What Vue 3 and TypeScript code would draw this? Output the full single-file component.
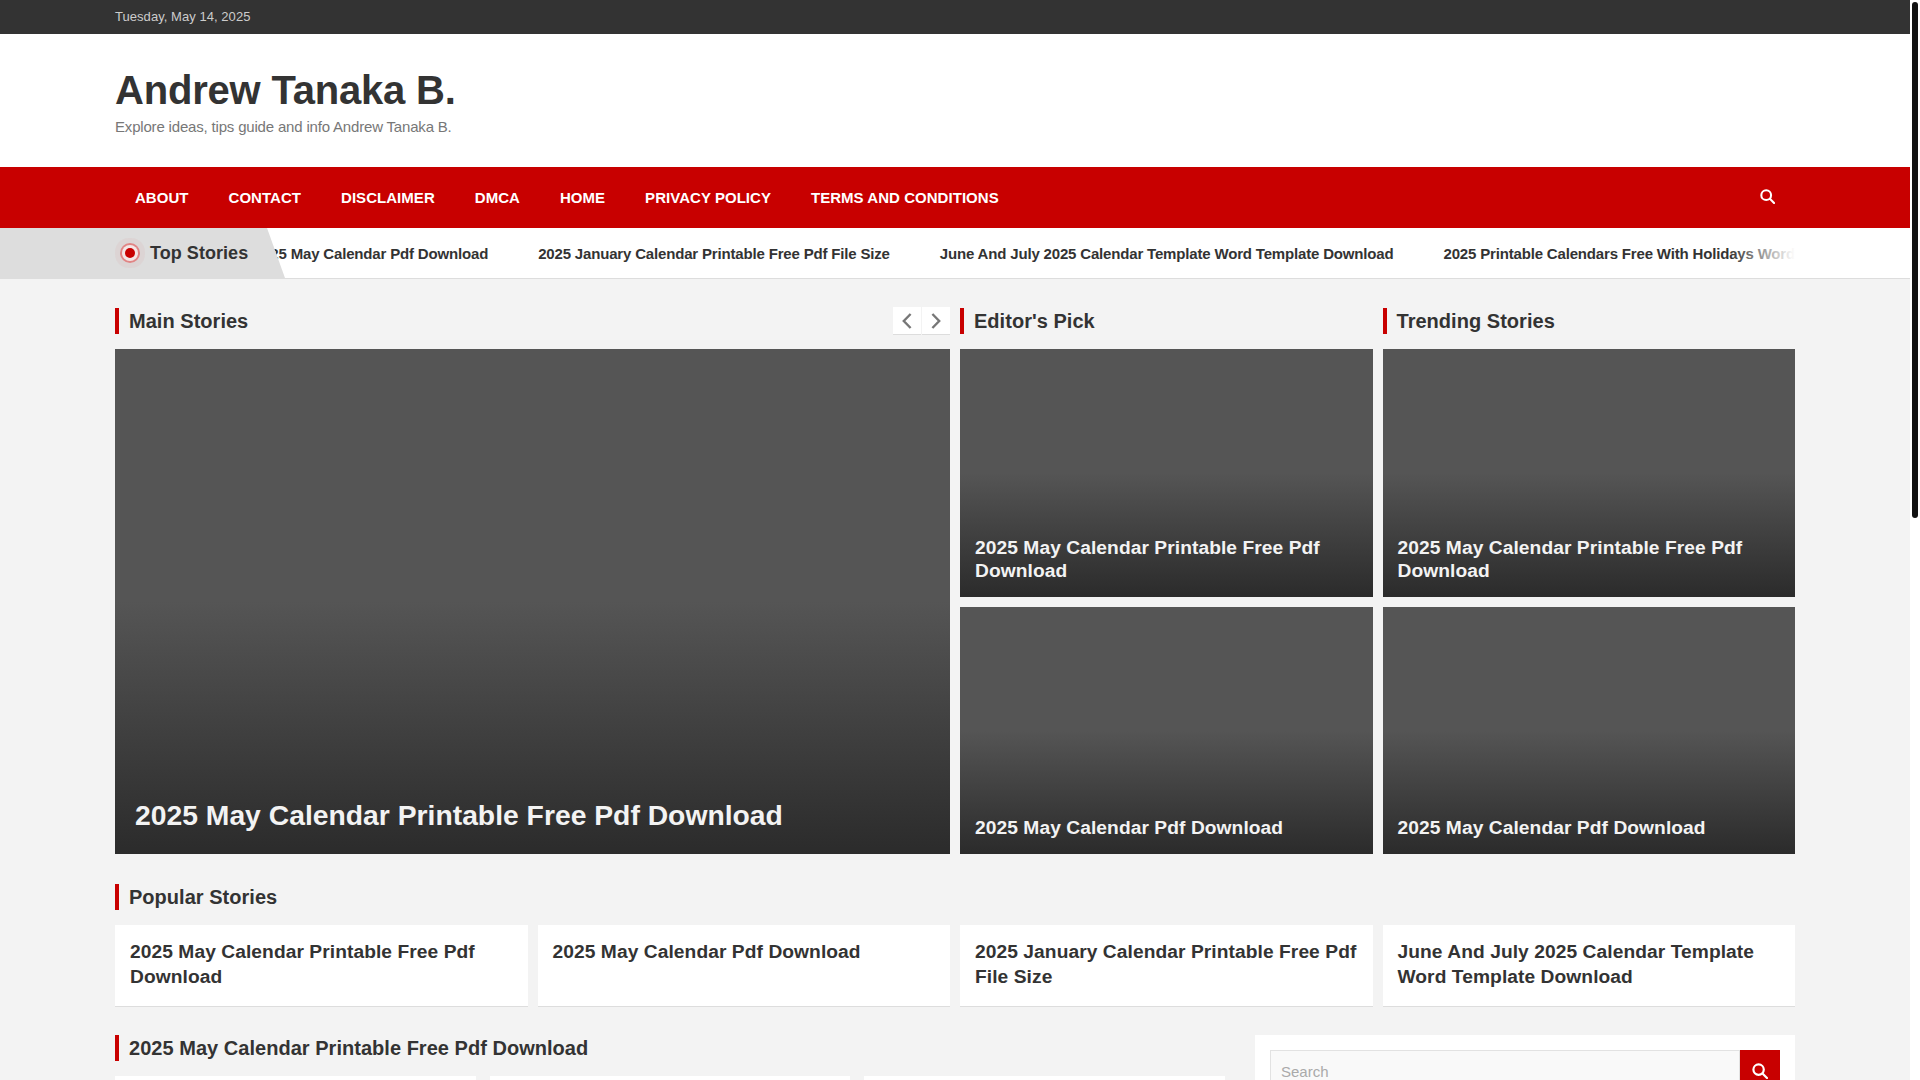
<script setup lang="ts">
const navItems: string[] = ['About', 'Contact', 'Disclaimer', 'DMCA', 'Home', 'Privacy Policy', 'Terms and Conditions']
const tickers: string[] = [
  '2025 May Calendar Pdf Download',
  '2025 January Calendar Printable Free Pdf File Size',
  'June And July 2025 Calendar Template Word Template Download',
  '2025 Printable Calendars Free With Holidays Word Template Download',
]
const editors: string[] = ['2025 May Calendar Printable Free Pdf Download', '2025 May Calendar Pdf Download']
const popular: string[] = [
  '2025 May Calendar Printable Free Pdf Download',
  '2025 May Calendar Pdf Download',
  '2025 January Calendar Printable Free Pdf File Size',
  'June And July 2025 Calendar Template Word Template Download',
]
const posts: string[] = [
  '2025 May Calendar Printable Free Pdf',
  '2025 May Calendar Pdf Download',
  '2025 January Calendar Printable Free Pdf File Size',
  'June And July 2025 Calendar Template',
  '2025 Printable Calendars Free With Holidays',
  '2025 May Calendar Printable Free Pdf Download',
]
</script>

<template>
  <div class="page">
    <div class="topbar">
      <div class="wrap"><span class="date">Tuesday, May 14, 2025</span></div>
    </div>

    <header class="brand">
      <div class="wrap">
        <h1 class="site-title">Andrew Tanaka B.</h1>
        <p class="tagline">Explore ideas, tips guide and info Andrew Tanaka B.</p>
      </div>
    </header>

    <nav class="nav">
      <div class="wrap nav-in">
        <a v-for="item in navItems" :key="item" class="nav-link">{{ item }}</a>
        <svg class="nav-search" viewBox="0 0 16 16" width="15" height="15" fill="none" stroke="#fff" stroke-width="2.2">
          <circle cx="6.6" cy="6.6" r="5.2" />
          <path d="M10.5 10.5 15 15" stroke-linecap="round" />
        </svg>
      </div>
    </nav>

    <div class="ticker">
      <div class="ticker-bg"></div>
      <div class="wrap ticker-in">
        <div class="ticker-label">
          <span class="pulse"></span>
          <span>Top Stories</span>
        </div>
        <div class="marquee">
          <div class="track">
            <a v-for="t in tickers" :key="t" class="tick">{{ t }}</a>
          </div>
          <div class="fade"></div>
        </div>
      </div>
    </div>

    <main class="wrap content">
      <section class="hero">
        <div class="hero-col">
          <div class="head-row">
            <h2 class="head">Main Stories</h2>
            <div class="arrows">
              <button class="arrow" type="button" aria-label="Previous">
                <svg viewBox="0 0 10 16" width="10" height="16" fill="none" stroke="#777" stroke-width="2.4"><path d="M8.6 1 1.8 8l6.8 7" /></svg>
              </button>
              <button class="arrow" type="button" aria-label="Next">
                <svg viewBox="0 0 10 16" width="10" height="16" fill="none" stroke="#777" stroke-width="2.4"><path d="M1.4 1l6.8 7-6.8 7" /></svg>
              </button>
            </div>
          </div>
          <article class="tile tile-big">
            <h3 class="tile-title big">2025 May Calendar Printable Free Pdf Download</h3>
          </article>
        </div>

        <div class="hero-col">
          <h2 class="head">Editor's Pick</h2>
          <div class="tile-stack">
            <article v-for="e in editors" :key="e" class="tile"><h3 class="tile-title">{{ e }}</h3></article>
          </div>
        </div>

        <div class="hero-col">
          <h2 class="head">Trending Stories</h2>
          <div class="tile-stack">
            <article v-for="e in editors" :key="e" class="tile"><h3 class="tile-title">{{ e }}</h3></article>
          </div>
        </div>
      </section>

      <section class="popular">
        <h2 class="head">Popular Stories</h2>
        <div class="pop-grid">
          <article v-for="p in popular" :key="p" class="pop-card">{{ p }}</article>
        </div>
      </section>

      <section class="lower">
        <div class="lower-main">
          <h2 class="head">2025 May Calendar Printable Free Pdf Download</h2>
          <div class="post-grid">
            <article v-for="p in posts" :key="p" class="post-card"><h3 class="post-title">{{ p }}</h3></article>
          </div>
        </div>
        <aside class="side">
          <form class="search" @submit.prevent>
            <input class="search-input" type="text" placeholder="Search" />
            <button class="search-btn" type="submit" aria-label="Search">
              <svg viewBox="0 0 16 16" width="16" height="16" fill="none" stroke="#fff" stroke-width="2.2">
                <circle cx="6.6" cy="6.6" r="5.2" />
                <path d="M10.5 10.5 15 15" stroke-linecap="round" />
              </svg>
            </button>
          </form>
        </aside>
      </section>
    </main>

    <footer class="footer">
      <div class="wrap"><span class="date">Andrew Tanaka B.</span></div>
    </footer>

    <div class="scrollbar"><div class="thumb"></div></div>
  </div>
</template>

<style>
body {
  background: #fff;
}
</style>

<style scoped>
.page {
  width: 1910px;
  font-family: "Liberation Sans", Arial, sans-serif;
  color: #333;
  background: #f3f3f3;
}
.wrap {
  width: 1680px;
  margin: 0 auto;
}
.topbar {
  height: 34px;
  padding-bottom: 2px;
  box-sizing: border-box;
  background: #333;
  display: flex;
  align-items: center;
}
.date {
  font-size: 13px;
  letter-spacing: 0.05px;
  color: #ccc;
}
.brand {
  height: 133px;
  background: #fff;
  padding-top: 33px;
  box-sizing: border-box;
}
.site-title {
  margin: 0;
  font-size: 40px;
  line-height: 46px;
  letter-spacing: -0.2px;
  font-weight: 700;
  color: #333;
}
.tagline {
  margin: 4px 0 0;
  font-size: 15px;
  line-height: 20px;
  color: #777;
  letter-spacing: -0.18px;
}
.nav {
  height: 61px;
  background: #c80000;
}
.nav-in {
  height: 100%;
  display: flex;
  align-items: center;
}
.nav-link {
  padding: 0 20px;
  color: #fff;
  font-size: 15px;
  font-weight: 700;
  letter-spacing: 0.04px;
  text-transform: uppercase;
}
.nav-search {
  margin-left: auto;
  margin-right: 20px;
  margin-bottom: 2px;
}
.ticker {
  position: relative;
  height: 51px;
  background: #fff;
  border-bottom: 1px solid #ddd;
  box-sizing: border-box;
}
.ticker-bg {
  position: absolute;
  inset: 0 auto 0 0;
  width: 285px;
  background: #ddd;
  clip-path: polygon(0 0, 267px 0, 100% 100%, 0 100%);
  z-index: 1;
}
.ticker-in {
  height: 100%;
  display: flex;
  align-items: center;
}
.ticker-label {
  position: relative;
  z-index: 2;
  width: 140px;
  flex: none;
  display: flex;
  align-items: center;
  gap: 15px;
  padding-left: 10px;
  font-size: 18px;
  letter-spacing: 0.05px;
  font-weight: 700;
}
.pulse {
  flex: none;
  width: 10px;
  height: 10px;
  border-radius: 50%;
  background: #c80000;
  box-shadow: 0 0 0 3px #f4e6e6, 0 0 0 5px #e08585, 0 0 0 10px rgba(200, 0, 0, 0.04);
}
.marquee {
  position: relative;
  flex: 1;
  min-width: 0;
  overflow: hidden;
}
.track {
  display: flex;
  gap: 50px;
  margin-left: -11px;
  white-space: nowrap;
}
.tick {
  flex: none;
  font-size: 15px;
  font-weight: 700;
  letter-spacing: -0.17px;
  color: #333;
}
.fade {
  position: absolute;
  inset: 0 0 0 auto;
  width: 66px;
  background: linear-gradient(to right, rgba(255, 255, 255, 0), #fff);
}
.content {
  padding-top: 29px;
}
.hero {
  display: grid;
  grid-template-columns: calc(50% - 5px) 1fr 1fr;
  gap: 10px;
}
.hero-col {
  display: flex;
  flex-direction: column;
}
.head {
  margin: 0 0 15px;
  height: 26px;
  border-left: 4px solid #c80000;
  padding-left: 10px;
  font-size: 20px;
  line-height: 26px;
  letter-spacing: 0.03px;
  font-weight: 700;
  color: #333;
}
.head-row {
  display: flex;
  justify-content: space-between;
}
.arrows {
  display: flex;
  gap: 1px;
  margin-top: -1px;
}
.arrow {
  width: 28px;
  height: 28px;
  padding: 0;
  border: 0;
  border-bottom: 1px solid #ddd;
  background: #fff;
  display: flex;
  align-items: center;
  justify-content: center;
}
.tile {
  position: relative;
  display: flex;
  align-items: flex-end;
  background: linear-gradient(to bottom, #555 50%, #2b2b2b 100%);
  min-width: 0;
}
.tile-big {
  height: 505px;
}
.tile-stack {
  height: 505px;
  display: grid;
  grid-template-rows: 1fr 1fr;
  gap: 10px;
}
.tile-title {
  margin: 0;
  padding: 0 15px 15px;
  font-size: 19.2px;
  line-height: 23px;
  letter-spacing: 0.07px;
  font-weight: 700;
  color: #f3f3f3;
}
.tile-title.big {
  padding: 0 20px 23px;
  font-size: 28.3px;
  line-height: 32px;
  letter-spacing: 0;
}
.popular {
  padding-top: 30px;
}
.pop-grid {
  display: grid;
  grid-template-columns: repeat(4, 1fr);
  gap: 10px;
}
.pop-card {
  height: 82px;
  box-sizing: border-box;
  padding: 14px 15px 0;
  background: #fff;
  border-bottom: 1px solid #ddd;
  font-size: 19.2px;
  line-height: 25px;
  letter-spacing: 0.07px;
  font-weight: 700;
  color: #333;
}
.lower {
  display: grid;
  grid-template-columns: 1110px 540px;
  gap: 30px;
  padding-top: 28px;
  padding-bottom: 30px;
}
.post-grid {
  display: grid;
  grid-template-columns: repeat(3, 1fr);
  gap: 14px;
}
.post-card {
  height: 520px;
  background: #fff;
  padding: 15px;
  box-sizing: border-box;
}
.post-title {
  margin: 0;
  font-size: 18px;
  line-height: 24px;
}
.side {
  background: #fff;
  padding: 15px;
  align-self: stretch;
}
.search {
  display: flex;
  height: 42px;
}
.search-input {
  flex: 1;
  min-width: 0;
  box-sizing: border-box;
  padding: 0 10px;
  border: 1px solid #e2e2e2;
  background: #f9f9f9;
  font-family: inherit;
  font-size: 15px;
  outline: none;
}
.search-input::placeholder {
  color: #aaa;
}
.search-btn {
  flex: none;
  width: 40px;
  border: 0;
  padding: 0;
  background: #c80000;
  display: flex;
  align-items: center;
  justify-content: center;
}
.footer {
  height: 60px;
  background: #333;
  display: flex;
  align-items: center;
}
.scrollbar {
  position: fixed;
  top: 0;
  right: 0;
  bottom: 0;
  width: 10px;
  background: #fff;
}
.thumb {
  margin: 2px 2px 0;
  height: 516px;
  border-radius: 3px;
  background: #111;
}
</style>
